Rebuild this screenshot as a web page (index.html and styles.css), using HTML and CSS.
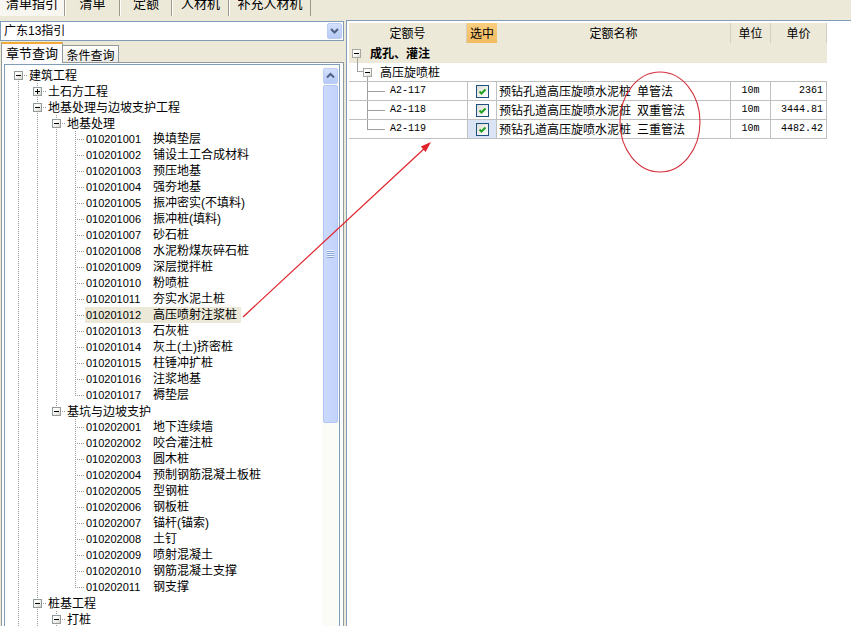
FILE: index.html
```html
<!DOCTYPE html>
<html>
<head>
<meta charset="utf-8">
<link rel="stylesheet" href="styles.css">
</head>
<body>
<div class="app">
  <div class="tabs">
    <div class="tab on w1"><span>清单指引</span></div>
    <div class="tab w2"><span>清单</span></div>
    <div class="tab w3"><span>定额</span></div>
    <div class="tab w4"><span>人材机</span></div>
    <div class="tab w5"><span>补充人材机</span></div>
  </div>
  <div class="main">
    <div class="left">
      <div class="combo">
        <span class="combo-text">广东13指引</span>
        <span class="combo-btn"><svg width="15" height="16" viewBox="0 0 15 16"><polyline points="4,6 7.5,9.5 11,6" fill="none" stroke="#4d6185" stroke-width="2"/></svg></span>
      </div>
      <div class="subtabs">
        <div class="st on">章节查询</div>
        <div class="st">条件查询</div>
      </div>
      <div class="page">
        <div class="tree">
          <div class="rows">
            <div class="r"><i class="d"><b class="mi"></b></i><span class="tx">建筑工程</span></div>
            <div class="r"><i class="v"></i><i class="t"><b class="pl"></b></i><span class="tx">土石方工程</span></div>
            <div class="r"><i class="v"></i><i class="t"><b class="mi"></b></i><span class="tx">地基处理与边坡支护工程</span></div>
            <div class="r"><i class="v"></i><i class="v"></i><i class="t"><b class="mi"></b></i><span class="tx">地基处理</span></div>
            <div class="r"><i class="v"></i><i class="v"></i><i class="v"></i><i class="t"></i><span class="lf"><span class="cd">010201001</span><span class="nm">换填垫层</span></span></div>
            <div class="r"><i class="v"></i><i class="v"></i><i class="v"></i><i class="t"></i><span class="lf"><span class="cd">010201002</span><span class="nm">铺设土工合成材料</span></span></div>
            <div class="r"><i class="v"></i><i class="v"></i><i class="v"></i><i class="t"></i><span class="lf"><span class="cd">010201003</span><span class="nm">预压地基</span></span></div>
            <div class="r"><i class="v"></i><i class="v"></i><i class="v"></i><i class="t"></i><span class="lf"><span class="cd">010201004</span><span class="nm">强夯地基</span></span></div>
            <div class="r"><i class="v"></i><i class="v"></i><i class="v"></i><i class="t"></i><span class="lf"><span class="cd">010201005</span><span class="nm">振冲密实(不填料)</span></span></div>
            <div class="r"><i class="v"></i><i class="v"></i><i class="v"></i><i class="t"></i><span class="lf"><span class="cd">010201006</span><span class="nm">振冲桩(填料)</span></span></div>
            <div class="r"><i class="v"></i><i class="v"></i><i class="v"></i><i class="t"></i><span class="lf"><span class="cd">010201007</span><span class="nm">砂石桩</span></span></div>
            <div class="r"><i class="v"></i><i class="v"></i><i class="v"></i><i class="t"></i><span class="lf"><span class="cd">010201008</span><span class="nm">水泥粉煤灰碎石桩</span></span></div>
            <div class="r"><i class="v"></i><i class="v"></i><i class="v"></i><i class="t"></i><span class="lf"><span class="cd">010201009</span><span class="nm">深层搅拌桩</span></span></div>
            <div class="r"><i class="v"></i><i class="v"></i><i class="v"></i><i class="t"></i><span class="lf"><span class="cd">010201010</span><span class="nm">粉喷桩</span></span></div>
            <div class="r"><i class="v"></i><i class="v"></i><i class="v"></i><i class="t"></i><span class="lf"><span class="cd">010201011</span><span class="nm">夯实水泥土桩</span></span></div>
            <div class="r"><i class="v"></i><i class="v"></i><i class="v"></i><i class="t"></i><span class="lf sel"><span class="cd">010201012</span><span class="nm">高压喷射注浆桩</span></span></div>
            <div class="r"><i class="v"></i><i class="v"></i><i class="v"></i><i class="t"></i><span class="lf"><span class="cd">010201013</span><span class="nm">石灰桩</span></span></div>
            <div class="r"><i class="v"></i><i class="v"></i><i class="v"></i><i class="t"></i><span class="lf"><span class="cd">010201014</span><span class="nm">灰土(土)挤密桩</span></span></div>
            <div class="r"><i class="v"></i><i class="v"></i><i class="v"></i><i class="t"></i><span class="lf"><span class="cd">010201015</span><span class="nm">柱锤冲扩桩</span></span></div>
            <div class="r"><i class="v"></i><i class="v"></i><i class="v"></i><i class="t"></i><span class="lf"><span class="cd">010201016</span><span class="nm">注浆地基</span></span></div>
            <div class="r"><i class="v"></i><i class="v"></i><i class="v"></i><i class="l"></i><span class="lf"><span class="cd">010201017</span><span class="nm">褥垫层</span></span></div>
            <div class="r"><i class="v"></i><i class="v"></i><i class="l"><b class="mi"></b></i><span class="tx">基坑与边坡支护</span></div>
            <div class="r"><i class="v"></i><i class="v"></i><i></i><i class="t"></i><span class="lf"><span class="cd">010202001</span><span class="nm">地下连续墙</span></span></div>
            <div class="r"><i class="v"></i><i class="v"></i><i></i><i class="t"></i><span class="lf"><span class="cd">010202002</span><span class="nm">咬合灌注桩</span></span></div>
            <div class="r"><i class="v"></i><i class="v"></i><i></i><i class="t"></i><span class="lf"><span class="cd">010202003</span><span class="nm">圆木桩</span></span></div>
            <div class="r"><i class="v"></i><i class="v"></i><i></i><i class="t"></i><span class="lf"><span class="cd">010202004</span><span class="nm">预制钢筋混凝土板桩</span></span></div>
            <div class="r"><i class="v"></i><i class="v"></i><i></i><i class="t"></i><span class="lf"><span class="cd">010202005</span><span class="nm">型钢桩</span></span></div>
            <div class="r"><i class="v"></i><i class="v"></i><i></i><i class="t"></i><span class="lf"><span class="cd">010202006</span><span class="nm">钢板桩</span></span></div>
            <div class="r"><i class="v"></i><i class="v"></i><i></i><i class="t"></i><span class="lf"><span class="cd">010202007</span><span class="nm">锚杆(锚索)</span></span></div>
            <div class="r"><i class="v"></i><i class="v"></i><i></i><i class="t"></i><span class="lf"><span class="cd">010202008</span><span class="nm">土钉</span></span></div>
            <div class="r"><i class="v"></i><i class="v"></i><i></i><i class="t"></i><span class="lf"><span class="cd">010202009</span><span class="nm">喷射混凝土</span></span></div>
            <div class="r"><i class="v"></i><i class="v"></i><i></i><i class="t"></i><span class="lf"><span class="cd">010202010</span><span class="nm">钢筋混凝土支撑</span></span></div>
            <div class="r"><i class="v"></i><i class="v"></i><i></i><i class="l"></i><span class="lf"><span class="cd">010202011</span><span class="nm">钢支撑</span></span></div>
            <div class="r"><i class="v"></i><i class="t"><b class="mi"></b></i><span class="tx">桩基工程</span></div>
            <div class="r"><i class="v"></i><i class="v"></i><i class="t"><b class="mi"></b></i><span class="tx">打桩</span></div>
          </div>
          <div class="sb">
            <div class="sb-up"><svg width="15" height="16" viewBox="0 0 15 16"><polyline points="4,9.5 7.5,6 11,9.5" fill="none" stroke="#4d6185" stroke-width="2"/></svg></div>
            <div class="sb-thumb"><span class="grip"></span></div>
          </div>
        </div>
      </div>
    </div>
    <div class="right">
      <div class="grid">
        <div class="gr hdr">
          <div>定额号</div><div class="pick">选中</div><div>定额名称</div><div>单位</div><div>单价</div>
        </div>
        <div class="grp1"><b class="tb"></b><span class="gt">成孔、灌注</span></div>
        <div class="grp2"><b class="tb"></b><span class="gt2">高压旋喷桩</span></div>
        <div class="gr dr">
          <div class="code ct">A2-117</div>
          <div class="chk"><span class="cb"><svg width="11" height="11" viewBox="0 0 11 11"><polyline points="2.5,5.5 4.5,7.5 8.5,3.5" fill="none" stroke="#21a121" stroke-width="2"/></svg></span></div>
          <div class="name"><span>预钻孔道高压旋喷水泥桩</span><span class="sfx">单管法</span></div>
          <div class="unit">10m</div>
          <div class="price">2361</div>
        </div>
        <div class="gr dr">
          <div class="code ct">A2-118</div>
          <div class="chk"><span class="cb"><svg width="11" height="11" viewBox="0 0 11 11"><polyline points="2.5,5.5 4.5,7.5 8.5,3.5" fill="none" stroke="#21a121" stroke-width="2"/></svg></span></div>
          <div class="name"><span>预钻孔道高压旋喷水泥桩</span><span class="sfx">双重管法</span></div>
          <div class="unit">10m</div>
          <div class="price">3444.81</div>
        </div>
        <div class="gr dr">
          <div class="code cl">A2-119</div>
          <div class="chk cur"><span class="cb"><svg width="11" height="11" viewBox="0 0 11 11"><polyline points="2.5,5.5 4.5,7.5 8.5,3.5" fill="none" stroke="#21a121" stroke-width="2"/></svg></span></div>
          <div class="name"><span>预钻孔道高压旋喷水泥桩</span><span class="sfx">三重管法</span></div>
          <div class="unit">10m</div>
          <div class="price">4482.42</div>
        </div>
      </div>
    </div>
  </div>
  <svg class="annot" width="851" height="626" viewBox="0 0 851 626">
    <line x1="243" y1="317" x2="426" y2="147" stroke="#e0242c" stroke-width="1.2"/>
    <polygon points="431,142 425.6,152 420.8,146.6" fill="#e0242c"/>
    <ellipse cx="660" cy="122" rx="40" ry="50" fill="none" stroke="#d4303c" stroke-width="1.1"/>
  </svg>
</div>
</body>
</html>
```

FILE: styles.css
```css
* { box-sizing: border-box; }
html, body { margin: 0; padding: 0; }
body {
  background: #ece9d8;
  font-family: "Liberation Sans", "Noto Sans CJK SC", sans-serif;
  font-size: 12px;
  color: #000;
}
.app {
  width: 851px;
  height: 626px;
  overflow: hidden;
  display: flex;
  flex-direction: column;
  gap: 4px;
  position: relative;
}

/* top tabs */
.tabs {
  height: 16px;
  display: flex;
  overflow: hidden;
  flex: none;
}
.tab {
  height: 16px;
  display: flex;
  justify-content: center;
  border-right: 1px solid #9d9a8c;
  border-left: 1px solid #fff;
  font-family: "Noto Sans CJK SC", sans-serif;
  font-size: 13px;
}
.tab span { display: block; line-height: 13px; margin-top: -4px; }
.tab.on { background: #f7f6f1; border-left: 0; }
.w1 { width: 65px; }
.w2 { width: 55px; }
.w3 { width: 52px; }
.w4 { width: 57px; }
.w5 { width: 82px; }

.main {
  flex: 1;
  min-height: 0;
  display: flex;
  gap: 2px;
}
.left {
  width: 344px;
  display: flex;
  flex-direction: column;
}
.combo {
  margin-top: 1px;
  height: 20px;
  border: 1px solid #7f9db9;
  background: #fff;
  display: flex;
  align-items: flex-start;
  justify-content: space-between;
}
.combo-text {
  line-height: 18px;
  padding-left: 3px;
  font-family: "Liberation Sans", "Noto Sans CJK SC", sans-serif;
}
.combo-btn {
  margin: 1px 1px 0 0;
  width: 15px;
  height: 16px;
  border-radius: 2px;
  background: linear-gradient(#d3e0fd, #b6c9f6);
  border: 1px solid #bccdf5;
  display: flex;
}
.combo-btn svg { margin: -1px; }

.subtabs {
  margin-top: 1px;
  height: 20px;
  display: flex;
  align-items: flex-end;
  padding-left: 1px;
}
.st {
  height: 17px;
  width: 56px;
  border: 1px solid #919b9c;
  border-bottom: 0;
  border-left: 0;
  background: linear-gradient(#fff, #ecebe6);
  line-height: 16px;
  text-align: center;
  font-family: "Noto Sans CJK SC", sans-serif;
  font-size: 12px;
  padding-top: 1px;
}
.st.on {
  height: 21px;
  width: 62px;
  margin-bottom: -1px;
  border-left: 1px solid #919b9c;
  border-top: 2px solid #f3a93a;
  background: #fcfcfe;
  position: relative;
  z-index: 1;
  padding-top: 1px;
  font-size: 13px;
}
.page {
  flex: 1;
  min-height: 0;
  margin-left: 1px;
  width: 343px;
  border: 1px solid #919b9c;
  border-bottom: 0;
  background: #fcfcfe;
  padding: 1px 3px 0 2px;
  display: flex;
}
.tree {
  flex: 1;
  border: 1px solid #7f9db9;
  border-bottom: 0;
  background: #fff;
  display: flex;
  overflow: hidden;
}
.rows {
  flex: 1;
  padding: 2px 0 0 4px;
  overflow: hidden;
}
.r {
  display: flex;
  height: 16px;
  align-items: center;
  white-space: nowrap;
}
.r i {
  display: flex;
  align-items: center;
  flex: none;
  width: 19px;
  height: 16px;
  --dv: repeating-linear-gradient(to bottom, #9a9a9a 0 1px, transparent 1px 2px);
  --dh: repeating-linear-gradient(to right, #9a9a9a 0 1px, transparent 1px 2px);
}
.r i.v { background: var(--dv) 9px 0 / 1px 16px no-repeat; }
.r i.t { background: var(--dh) 9px 8px / 10px 1px no-repeat, var(--dv) 9px 0 / 1px 16px no-repeat; }
.r i.l { background: var(--dh) 9px 8px / 10px 1px no-repeat, var(--dv) 9px 0 / 1px 8px no-repeat; }
.r i.d { background: var(--dh) 9px 8px / 10px 1px no-repeat, var(--dv) 9px 8px / 1px 8px no-repeat; }
.r b {
  display: block;
  width: 9px;
  height: 9px;
  margin-left: 5px;
  border: 1px solid #919b9c;
}
.r b.mi {
  background: linear-gradient(#000, #000) center / 5px 1px no-repeat,
              linear-gradient(135deg, #fff 30%, #d9d6c6);
}
.r b.pl {
  background: linear-gradient(#000, #000) center / 5px 1px no-repeat,
              linear-gradient(#000, #000) center / 1px 5px no-repeat,
              linear-gradient(135deg, #fff 30%, #d9d6c6);
}
.tx {
  margin-left: 1px;
  line-height: 16px;
  font-family: "Noto Sans CJK SC", sans-serif;
  font-size: 12px;
}
.lf {
  display: flex;
  align-items: center;
  height: 16px;
  padding: 0 4px 0 1px;
}
.lf.sel { background: #ece9d8; }
.cd {
  width: 67px;
  font-family: "Liberation Sans", sans-serif;
  font-size: 11px;
  line-height: 16px;
}
.nm {
  font-family: "Liberation Sans", "Noto Sans CJK SC", sans-serif;
  font-size: 12px;
  line-height: 16px;
}

/* scrollbar */
.sb {
  width: 17px;
  flex: none;
  background: #fbfbf7;
  display: flex;
  flex-direction: column;
  align-items: center;
}
.sb-up {
  margin-top: 3px;
  width: 15px;
  height: 16px;
  border-radius: 2px;
  border: 1px solid #bccdf5;
  background: linear-gradient(#d3e0fd, #b6c9f6);
  display: flex;
}
.sb-up svg { margin: -1px; }
.sb-thumb {
  margin-top: 1px;
  width: 15px;
  height: 338px;
  border: 1px solid #b3c6f3;
  border-radius: 2px;
  background: linear-gradient(to right, #cbd9fd, #c2d3fc);
  display: flex;
  align-items: center;
  justify-content: center;
}
.grip {
  width: 7px;
  height: 8px;
  background: repeating-linear-gradient(to bottom, #eef3fe 0 1px, #8aa4e0 1px 2px);
}

/* right panel */
.right {
  flex: 1;
  border-top: 1px solid #7f9db9;
  border-left: 1px solid #7f9db9;
  background: #fff;
  padding: 2px 0 0 2px;
}
.grid { width: 478px; }
.gr {
  display: grid;
  grid-template-columns: 118px 30px 234px 40px 56px;
}
.hdr {
  height: 20px;
  background: #ece9d8;
}
.hdr div {
  border-right: 1px solid #d4d0c0;
  text-align: center;
  line-height: 20px;
  font-family: "Noto Sans CJK SC", sans-serif;
  font-size: 12px;
}
.hdr div.pick {
  background: linear-gradient(#f9cf7e, #f2bb62);
  border-right: 0;
}
.grp1 {
  height: 20px;
  background: #ece9d8 linear-gradient(#a0a0a0, #a0a0a0) 8px 15px / 1px 5px no-repeat;
  display: flex;
  align-items: center;
  padding-left: 3px;
}
.tb {
  display: block;
  width: 9px;
  height: 9px;
  border: 1px solid #a8a8a0;
  background: linear-gradient(#000, #000) center / 5px 1px no-repeat,
              linear-gradient(135deg, #fff 40%, #dcdad0);
}
.gt {
  margin-left: 9px;
  font-weight: bold;
  font-family: "Noto Sans CJK SC", sans-serif;
  font-size: 12px;
  line-height: 20px;
}
.grp2 {
  height: 19px;
  border-bottom: 1px solid #c0c0c0;
  display: flex;
  align-items: center;
  padding-left: 14px;
  background:
    linear-gradient(#a0a0a0, #a0a0a0) 8px 0 / 1px 9px no-repeat,
    linear-gradient(#a0a0a0, #a0a0a0) 8px 8px / 6px 1px no-repeat,
    linear-gradient(#a0a0a0, #a0a0a0) 18px 13px / 1px 6px no-repeat;
}
.gt2 {
  margin-left: 8px;
  font-family: "Noto Sans CJK SC", sans-serif;
  font-size: 12px;
  line-height: 18px;
}
.dr {
  height: 19px;
  border-bottom: 1px solid #c0c0c0;
}
.dr > div {
  border-right: 1px solid #c0c0c0;
  line-height: 18px;
  white-space: nowrap;
}
.code {
  padding-left: 41px;
  font-family: "Liberation Mono", monospace;
  font-size: 10px;
  border-right: 0 !important;
}
.code.ct {
  background:
    linear-gradient(#a0a0a0, #a0a0a0) 18px 0 / 1px 18px no-repeat,
    linear-gradient(#a0a0a0, #a0a0a0) 18px 9px / 18px 1px no-repeat;
}
.code.cl {
  background:
    linear-gradient(#a0a0a0, #a0a0a0) 18px 0 / 1px 10px no-repeat,
    linear-gradient(#a0a0a0, #a0a0a0) 18px 9px / 18px 1px no-repeat;
}
.chk {
  display: flex;
  align-items: center;
  justify-content: center;
  border-left: 1px solid #c0c0c0;
}
.chk.cur { background: #dbe4f4; }
.cb {
  width: 13px;
  height: 13px;
  border: 1px solid #1c5180;
  background: linear-gradient(135deg, #dcdcd7, #fff);
  display: flex;
}
.name {
  padding-left: 2px;
  font-family: "Noto Sans CJK SC", sans-serif;
  font-size: 12px;
}
.sfx { margin-left: 6px; }
.unit {
  text-align: center;
  font-family: "Liberation Mono", monospace;
  font-size: 10px;
}
.price {
  text-align: right;
  padding-right: 3px;
  font-family: "Liberation Mono", monospace;
  font-size: 10px;
}

.annot {
  position: absolute;
  left: 0;
  top: 0;
  pointer-events: none;
}
```
